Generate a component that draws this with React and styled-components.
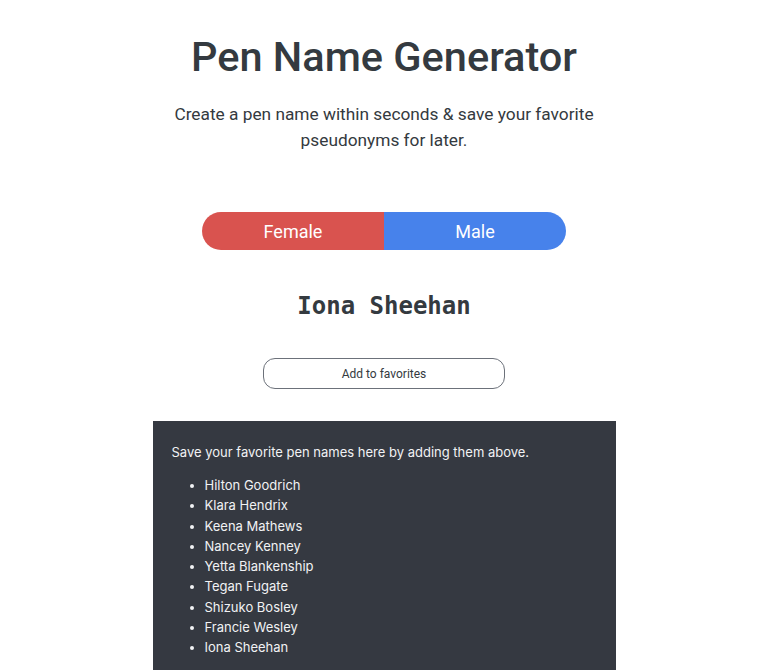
import React, { useState } from 'react';
import styled, { createGlobalStyle } from 'styled-components';

const GlobalStyle = createGlobalStyle`
    body {
        margin: 0;
        background: #fff;
        font-family: Roboto, "Liberation Sans", sans-serif;
        color: #343a40;
    }
`;

const Page = styled.div`
    display: flex;
    flex-direction: column;
    align-items: center;
    padding-top: 32px;
`;

const Title = styled.h1`
    margin: 0;
    font-size: 41.5px;
    font-weight: 500;
    line-height: 50px;
    color: #343a40;
`;

const Subtitle = styled.p`
    margin: 19px 0 0;
    max-width: 440px;
    text-align: center;
    font-size: 17.3px;
    line-height: 26px;
    color: #343a40;
`;

const Toggle = styled.div`
    display: flex;
    width: 364px;
    height: 38px;
    margin-top: 59px;
    border-radius: 19px;
    overflow: hidden;
`;

const ToggleButton = styled.button`
    flex: 1;
    border: none;
    outline: none;
    cursor: pointer;
    color: #fff;
    font-family: Roboto, sans-serif;
    font-size: 18px;
    background-color: ${(props) => props.color};
`;

const Name = styled.h2`
    margin: 40px 0 0;
    font-family: "DejaVu Sans Mono", monospace;
    font-size: 24px;
    font-weight: bold;
    line-height: 32px;
    color: #343a40;
`;

const AddButton = styled.button`
    margin-top: 36px;
    width: 242px;
    height: 31px;
    border: 1px solid #6c717a;
    border-radius: 12px;
    background: #fff;
    font-family: Roboto, sans-serif;
    font-size: 12px;
    color: #343a40;
    cursor: pointer;
`;

const Favorites = styled.div`
    margin-top: 32px;
    width: 463px;
    box-sizing: border-box;
    padding: 22px 19px 12px;
    background-color: #353941;
    color: #f1f2f4;
    font-family: Inter, sans-serif;
    font-size: 13px;
`;

const Intro = styled.p`
    margin: 0;
    line-height: 18px;
`;

const List = styled.ul`
    margin: 14px 0 0;
    padding-left: 33px;
    line-height: 20.3px;
`;

const females = ['Iona Sheehan', 'Klara Hendrix', 'Keena Mathews'];

const App = () => {
    const [name, setName] = useState('Iona Sheehan');
    const [favorites, setFavorites] = useState([
        'Hilton Goodrich',
        'Klara Hendrix',
        'Keena Mathews',
        'Nancey Kenney',
        'Yetta Blankenship',
        'Tegan Fugate',
        'Shizuko Bosley',
        'Francie Wesley',
        'Iona Sheehan',
    ]);

    return (
        <Page>
            <GlobalStyle />
            <Title>Pen Name Generator</Title>
            <Subtitle>Create a pen name within seconds &amp; save your favorite pseudonyms for later.</Subtitle>
            <Toggle>
                <ToggleButton color="#d9534f" onClick={() => setName(females[Math.floor(Math.random() * females.length)])}>Female</ToggleButton>
                <ToggleButton color="#4782eb" onClick={() => setName('Hilton Goodrich')}>Male</ToggleButton>
            </Toggle>
            <Name>{name}</Name>
            <AddButton onClick={() => setFavorites(favorites.concat([name]))}>Add to favorites</AddButton>
            <Favorites>
                <Intro>Save your favorite pen names here by adding them above.</Intro>
                <List>
                    {favorites.map((fav, i) => (
                        <li key={i}>{fav}</li>
                    ))}
                </List>
            </Favorites>
        </Page>
    );
};

export default App;
